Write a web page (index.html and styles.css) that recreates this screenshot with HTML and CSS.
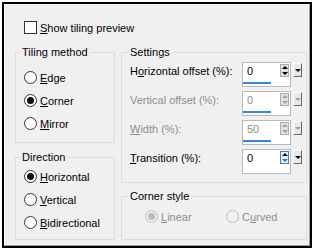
FILE: index.html
```html
<!DOCTYPE html>
<html lang="en">

<head>
    <meta charset="UTF-8">
    <title>Tiling options</title>
    <link rel="stylesheet" href="styles.css">
</head>

<body>
    <div class="frame">
        <div class="panel">
            <label class="check-row">
                <span class="check"></span>
                <span><u>S</u>how tiling preview</span>
            </label>

            <div class="cols">
                <div class="col-left">
                    <fieldset class="group tiling">
                        <legend>Tiling method</legend>
                        <div class="body">
                            <div class="radio"><span class="dot"></span><span><u>E</u>dge</span></div>
                            <div class="radio"><span class="dot on"></span><span><u>C</u>orner</span></div>
                            <div class="radio"><span class="dot"></span><span><u>M</u>irror</span></div>
                        </div>
                    </fieldset>

                    <fieldset class="group direction">
                        <legend>Direction</legend>
                        <div class="body">
                            <div class="radio"><span class="dot on"></span><span><u>H</u>orizontal</span></div>
                            <div class="radio"><span class="dot"></span><span><u>V</u>ertical</span></div>
                            <div class="radio"><span class="dot"></span><span><u>B</u>idirectional</span></div>
                        </div>
                    </fieldset>
                </div>

                <div class="col-right">
                    <fieldset class="group settings">
                        <legend>Settings</legend>
                        <div class="body">
                            <div class="row">
                                <span class="label">H<u>o</u>rizontal offset (%):</span>
                                <div class="spin">
                                    <div class="field">
                                        <span class="val">0</span>
                                        <span class="arrows"><b class="up"></b><b class="down"></b></span>
                                        <i class="bar"></i>
                                    </div>
                                    <span class="drop"></span>
                                </div>
                            </div>

                            <div class="row off">
                                <span class="label">Vertical offset (%):</span>
                                <div class="spin">
                                    <div class="field">
                                        <span class="val">0</span>
                                        <span class="arrows"><b class="up"></b><b class="down"></b></span>
                                        <i class="bar"></i>
                                    </div>
                                    <span class="drop"></span>
                                </div>
                            </div>

                            <div class="row off">
                                <span class="label"><u>W</u>idth (%):</span>
                                <div class="spin">
                                    <div class="field">
                                        <span class="val">50</span>
                                        <span class="arrows"><b class="up"></b><b class="down"></b></span>
                                        <i class="bar"></i>
                                    </div>
                                    <span class="drop"></span>
                                </div>
                            </div>

                            <div class="row">
                                <span class="label"><u>T</u>ransition (%):</span>
                                <div class="spin">
                                    <div class="field">
                                        <span class="val">0</span>
                                        <span class="arrows hot"><b class="up"></b><b class="down"></b></span>
                                    </div>
                                    <span class="drop"></span>
                                </div>
                            </div>
                        </div>
                    </fieldset>

                    <fieldset class="group corner">
                        <legend>Corner style</legend>
                        <div class="body radios-inline">
                            <div class="radio off linear"><span class="dot on"></span><span><u>L</u>inear</span></div>
                            <div class="radio off"><span class="dot"></span><span>C<u>u</u>rved</span></div>
                        </div>
                    </fieldset>
                </div>
            </div>
        </div>
    </div>
</body>

</html>
```

FILE: styles.css
```css
body {
    margin: 0;
    background: #fff;
    font-family: "Liberation Sans", Arial, sans-serif;
    font-size: 11px;
    line-height: 14px;
    color: #000;
}

.frame {
    margin: 2px;
    width: 310px;
    height: 246px;
    box-sizing: border-box;
    border: 2px solid #000;
}

.panel {
    height: 100%;
    box-sizing: border-box;
    background: #f0f0f0;
    border: 1px solid #a0a0a0;
    border-top-color: #fff;
    border-left-color: #fff;
}

.check-row {
    display: flex;
    align-items: center;
    height: 13px;
    margin: 16px 0 0 19px;
}

.check {
    width: 13px;
    height: 13px;
    box-sizing: border-box;
    border: 1px solid #333;
    background: #fff;
    margin-right: 3px;
}

.cols {
    display: flex;
    gap: 6px;
    margin: 11px 0 0 10px;
}

.col-left {
    width: 100px;
}

.col-right {
    width: 186px;
}

.group {
    margin: 0;
    padding: 0;
    border: 1px solid #dcdcdc;
    min-width: 0;
}

.group legend {
    padding: 0 2px;
    margin-left: 4px;
    line-height: 14px;
}

.tiling .body {
    padding: 7px 0 7px 8px;
}

.direction {
    margin-top: 7px;
}

.direction .body {
    padding: 1px 0 5px 8px;
}

.settings legend,
.corner legend {
    margin-left: 6px;
}

.settings .body {
    padding: 3px 0 4px 8px;
}

.corner {
    margin-top: 6px;
}

.corner .body {
    padding: 2px 0 11px 23px;
}

/* radio buttons */
.radio {
    display: flex;
    align-items: center;
    height: 23px;
}

.dot {
    width: 13px;
    height: 13px;
    box-sizing: border-box;
    border: 1px solid #333;
    border-radius: 50%;
    background: #fff;
    margin-right: 3px;
    display: flex;
    align-items: center;
    justify-content: center;
}

.dot.on::after {
    content: '';
    width: 7px;
    height: 7px;
    border-radius: 50%;
    background: #111;
}

.radio.off {
    color: #8d8d8d;
}

.radio.off .dot {
    border-color: #bcbcbc;
    background: #f0f0f0;
}

.radio.off .dot.on::after {
    background: #bcbcbc;
}

.radios-inline {
    display: flex;
}

.linear {
    width: 81px;
}

/* settings rows */
.row {
    display: grid;
    grid-template-columns: 112px auto;
    height: 29px;
}

.label {
    margin-top: 2px;
}

.row.off .label,
.row.off .val {
    color: #8d8d8d;
}

.spin {
    display: flex;
    align-items: flex-start;
    gap: 2px;
}

.field {
    position: relative;
    width: 49px;
    height: 25px;
    box-sizing: border-box;
    border: 1px solid #b9b9b9;
    background: #fff;
    display: flex;
    align-items: flex-start;
    padding: 1px 1px 0 4px;
}

.val {
    flex: 1;
}

.bar {
    position: absolute;
    left: 0;
    bottom: 2px;
    width: 28px;
    height: 2px;
    background: #2f88d8;
}

.arrows {
    width: 9px;
    height: 13px;
    box-sizing: border-box;
    border: 1px solid #adadad;
    background: #e1e1e1;
    display: flex;
    flex-direction: column;
    align-items: center;
    justify-content: space-around;
}

.arrows b {
    width: 0;
    height: 0;
    border-left: 3px solid transparent;
    border-right: 3px solid transparent;
}

.arrows .up {
    border-bottom: 3px solid #000;
}

.arrows .down {
    border-top: 3px solid #000;
}

.row.off .arrows .up {
    border-bottom-color: #a0a0a0;
}

.row.off .arrows .down {
    border-top-color: #a0a0a0;
}

.arrows.hot {
    background: #e5f1fb;
    border-color: #3c7fb1;
}

.arrows.hot .down {
    border-top-color: #2b7bd0;
}

.drop {
    width: 9px;
    height: 14px;
    box-sizing: border-box;
    margin-top: 1px;
    background: #e8e8e8;
    border: 1px solid #fff;
    border-right-color: #696969;
    border-bottom-color: #696969;
    display: flex;
    align-items: center;
    justify-content: center;
}

.drop::after {
    content: '';
    border-left: 3px solid transparent;
    border-right: 3px solid transparent;
    border-top: 3px solid #000;
}

.row.off .drop::after {
    border-top-color: #a0a0a0;
}
```
